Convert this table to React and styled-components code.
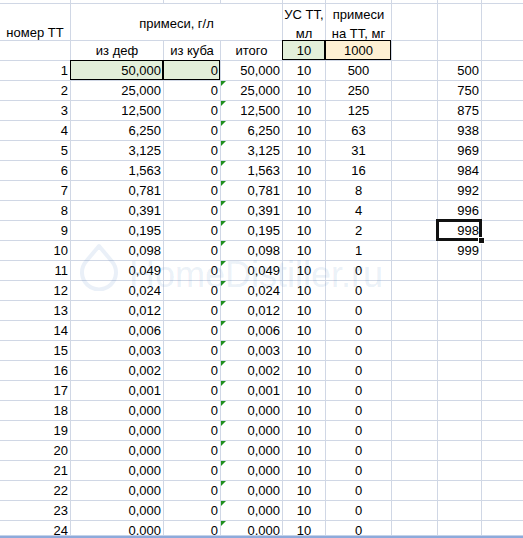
import React from "react";
import styled, { createGlobalStyle, css } from "styled-components";

const GlobalStyle = createGlobalStyle`
  html, body { margin: 0; padding: 0; background: #fff; }
  body {
    font-family: "Liberation Sans", Arial, sans-serif;
    font-size: 13px;
    color: #000;
  }
`;

const Window = styled.div`
  width: 523px;
  height: 538px;
  display: flex;
  flex-direction: column;
  overflow: hidden;
  background: #fff;
`;

const SheetArea = styled.div`
  position: relative;
  flex: 1;
  overflow: hidden;
`;

const Grid = styled.div`
  display: grid;
  grid-template-columns: 71px 93px 57px 62px 43px 66px 46px 44px 1fr;
  grid-template-rows: 4px 37px;
  grid-auto-rows: 20px;
`;

const Cell = styled.div`
  position: relative;
  box-sizing: border-box;
  border-right: ${(p) => (p.$last ? "none" : "1px solid #d0d7e5")};
  border-bottom: 1px solid #d0d7e5;
  display: flex;
  align-items: flex-start;
  justify-content: ${(p) => p.$align || "flex-end"};
  padding: ${(p) => p.$pt || 0}px 2px 0 2px;
  line-height: 19px;
  white-space: nowrap;
  background: ${(p) => p.$fill || "transparent"};
  grid-column: span ${(p) => p.$span || 1};

  ${(p) =>
    p.$boxed &&
    css`
      &::after {
        content: "";
        position: absolute;
        top: -1px;
        left: -1px;
        right: 0;
        bottom: 0;
        border: 1px solid #000;
        pointer-events: none;
      }
    `}

  ${(p) =>
    p.$flag &&
    css`
      &::before {
        content: "";
        position: absolute;
        top: 0;
        left: 0;
        width: 0;
        height: 0;
        border-top: 5px solid #1e8f1e;
        border-right: 5px solid transparent;
      }
    `}

  ${(p) =>
    p.$selected &&
    css`
      &::after {
        content: "";
        position: absolute;
        top: -2px;
        left: -2px;
        right: -1px;
        bottom: -1px;
        border: 3px solid #111;
        pointer-events: none;
        z-index: 2;
      }
      &::before {
        content: "";
        position: absolute;
        left: 40px;
        top: 16px;
        width: 5px;
        height: 5px;
        background: #111;
        border: 1px solid #fff;
        z-index: 3;
      }
    `}
`;

const Lines = styled.div`
  display: flex;
  flex-direction: column;
  align-items: center;
  width: 100%;
  line-height: 19px;
`;

const Watermark = styled.div`
  position: absolute;
  left: 80px;
  top: 243px;
  display: flex;
  align-items: flex-start;
  gap: 11px;
  pointer-events: none;
  z-index: 1;
`;

const WatermarkText = styled.span`
  margin-top: 14px;
  font-family: "Liberation Sans", Arial, sans-serif;
  font-size: 36px;
  line-height: 36px;
  color: rgba(60, 120, 190, 0.11);
  white-space: nowrap;
`;

const BottomBar = styled.div`
  flex: none;
  box-sizing: border-box;
  height: 3px;
  background: #8eaadb;
  border-top: 1px solid #c3d3ea;
`;

const GREEN = "#e3efda";
const YELLOW = "#fef0d3";

const B = [
  "50,000", "25,000", "12,500", "6,250", "3,125", "1,563", "0,781", "0,391",
  "0,195", "0,098", "0,049", "0,024", "0,012", "0,006", "0,003", "0,002",
  "0,001", "0,000", "0,000", "0,000", "0,000", "0,000", "0,000", "0,000",
];
const F = [500, 250, 125, 63, 31, 16, 8, 4, 2, 1];
const H = [500, 750, 875, 938, 969, 984, 992, 996, 998, 999];

function DataRow({ i }) {
  const n = i + 1;
  return (
    <>
      <Cell>{n}</Cell>
      <Cell $fill={n === 1 ? GREEN : undefined} $boxed={n === 1}>{B[i]}</Cell>
      <Cell $fill={n === 1 ? GREEN : undefined} $boxed={n === 1}>0</Cell>
      <Cell $flag={n > 1}>{B[i]}</Cell>
      <Cell $align="center">10</Cell>
      <Cell $align="center">{i < F.length ? F[i] : 0}</Cell>
      <Cell />
      <Cell $selected={n === 9}>{i < H.length ? H[i] : ""}</Cell>
      <Cell $last />
    </>
  );
}

function Drop() {
  return (
    <svg width="38" height="48" viewBox="0 0 38 48">
      <path
        d="M19 3 L32 18.5 A17 17 0 1 1 6 18.5 Z"
        fill="none"
        stroke="rgba(60,120,190,0.11)"
        strokeWidth="4"
        strokeLinejoin="round"
      />
    </svg>
  );
}

export default function App() {
  return (
    <>
      <GlobalStyle />
      <Window>
        <SheetArea>
          <Grid>
            {Array.from({ length: 8 }).map((_, k) => (
              <Cell key={"t" + k} />
            ))}
            <Cell $last />

            <Cell $align="center" $pt={19}>номер ТТ</Cell>
            <Cell $align="center" $pt={10} $span={3}>примеси, г/л</Cell>
            <Cell $align="center" $pt={1}>
              <Lines>
                <span>УС ТТ,</span>
                <span>мл</span>
              </Lines>
            </Cell>
            <Cell $align="center" $pt={1}>
              <Lines>
                <span>примеси</span>
                <span>на ТТ, мг</span>
              </Lines>
            </Cell>
            <Cell />
            <Cell />
            <Cell $last />

            <Cell />
            <Cell $align="center">из деф</Cell>
            <Cell $align="center">из куба</Cell>
            <Cell $align="center">итого</Cell>
            <Cell $align="center" $fill={GREEN} $boxed>10</Cell>
            <Cell $align="center" $fill={YELLOW} $boxed>1000</Cell>
            <Cell />
            <Cell />
            <Cell $last />

            {B.map((_, i) => (
              <DataRow key={i} i={i} />
            ))}
          </Grid>
          <Watermark>
            <Drop />
            <WatermarkText>HomeDistiller.ru</WatermarkText>
          </Watermark>
        </SheetArea>
        <BottomBar />
      </Window>
    </>
  );
}
